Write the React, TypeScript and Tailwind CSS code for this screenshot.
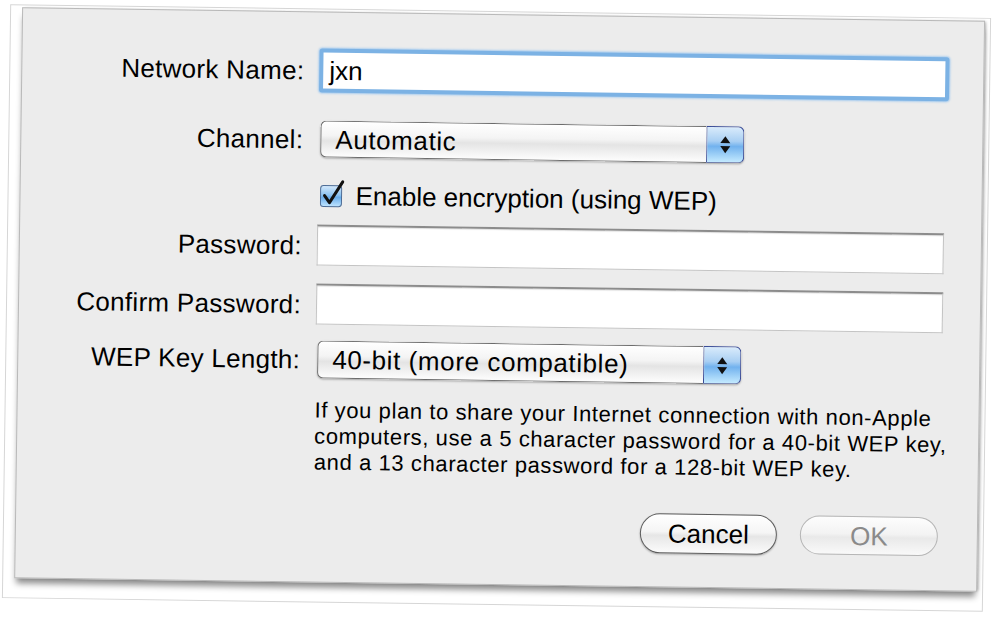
import React from 'react';

// Aqua-style "Network Name" sheet, shown slightly tilted like the photo

const Label = ({ children }: { children: React.ReactNode }) => (
  <div className="w-[282px] shrink-0 text-right text-[26px] leading-none tracking-[0.3px] text-black">
    {children}
  </div>
);

const TextField = ({ value, focused }: { value?: string; focused?: boolean }) => {
  if (focused) {
    return (
      <div className="ml-[15px] flex h-[44px] w-[630px] items-center rounded-[3px] border-[4px] border-[#7cb2e4] bg-white pl-[6px] text-[26px] leading-none text-black shadow-[0_0_2px_1px_#a9cdef]">
        {value}
      </div>
    );
  }
  return (
    <div className="ml-[15px] h-[41px] w-[627px] border border-[#c4c4c4] border-t-[2px] border-t-[#8c8c8c] bg-white shadow-[inset_0_1px_1px_rgba(0,0,0,0.12)]" />
  );
};

const Arrows = () => (
  <svg width="12" height="19" viewBox="0 0 12 19">
    <path d="M6 1 L11 8 L1 8 Z" fill="#111" />
    <path d="M1 11 L11 11 L6 18 Z" fill="#111" />
  </svg>
);

const PopUp = ({ value }: { value: string }) => (
  <div className="ml-[17px] flex h-full w-[424px] rounded-[6px] shadow-[0_1px_2px_rgba(0,0,0,0.3)]">
    <div className="flex flex-1 items-center rounded-l-[6px] border-y border-l border-[#6c6c6c] bg-[linear-gradient(#ffffff,#f4f4f4_40%,#e4e4e4_55%,#fdfdfd)] pl-[14px] text-[26px] leading-none tracking-[0.6px] text-black">
      {value}
    </div>
    <div className="flex w-[38px] items-center justify-center rounded-r-[6px] border border-[#3a4c97] border-b-[#6c7aa8] bg-[linear-gradient(#d9ebfb,#a9cff3_40%,#72b2ee_55%,#c4eaff)]">
      <Arrows />
    </div>
  </div>
);

const CheckBox = () => (
  <svg width="25" height="33" viewBox="0 0 25 33">
    <defs>
      <linearGradient id="cbfill" x1="0" y1="0" x2="0" y2="1">
        <stop offset="0" stopColor="#d6eafc" />
        <stop offset="0.45" stopColor="#8cc2f1" />
        <stop offset="0.55" stopColor="#68aceb" />
        <stop offset="1" stopColor="#c2e6ff" />
      </linearGradient>
    </defs>
    <rect x="1" y="6" width="21" height="21" rx="3" fill="url(#cbfill)" stroke="#4e6d96" />
    <path d="M5 16 L10 23 L23 2" fill="none" stroke="#111" strokeWidth="3" strokeLinecap="round" strokeLinejoin="round" />
  </svg>
);

export default function App() {
  return (
    <div className="h-[617px] w-[1000px] overflow-hidden bg-white pl-[6px] pt-[11px] font-['Liberation_Sans',Arial,sans-serif]">
      {/* parent window edge behind the sheet */}
      <div className="w-fit rotate-[0.8deg] border border-[#d6d6d6] pb-[19px] pl-[11px] pr-[5px] pt-[2px]">
        <div className="flex h-[571px] w-[963px] flex-col border border-[#b9b9b9] bg-[#ececec] pt-[36px] shadow-[0_7px_6px_-2px_rgba(0,0,0,0.45),2px_0_3px_-1px_rgba(0,0,0,0.3)]">
          <div className="flex h-[44px] items-center">
            <Label>Network Name:</Label>
            <TextField value="jxn" focused />
          </div>

          <div className="mt-[28px] flex h-[37px] items-center">
            <Label>Channel:</Label>
            <PopUp value="Automatic" />
          </div>

          <div className="mt-[23px] flex h-[30px] items-center pl-[299px]">
            <CheckBox />
            <span className="ml-[11px] text-[26px] leading-none text-black">Enable encryption (using WEP)</span>
          </div>

          <div className="mt-[14px] flex h-[41px] items-center">
            <Label>Password:</Label>
            <TextField />
          </div>

          <div className="mt-[18px] flex h-[41px] items-center">
            <Label>Confirm Password:</Label>
            <TextField />
          </div>

          <div className="mt-[16px] flex h-[38px] items-center">
            <Label>WEP Key Length:</Label>
            <PopUp value="40-bit (more compatible)" />
          </div>

          <div className="mt-[19px] flex flex-col whitespace-nowrap pl-[297px] text-[22px] leading-[26px] tracking-[0.6px] text-black">
            <span>If you plan to share your Internet connection with non-Apple</span>
            <span>computers, use a 5 character password for a 40-bit WEP key,</span>
            <span>and a 13 character password for a 128-bit WEP key.</span>
          </div>

          <div className="mt-[33px] flex justify-end gap-[23px] pr-[39px]">
            <button className="h-[40px] w-[137px] rounded-full border-[1.5px] border-[#5c5c5c] bg-[linear-gradient(#ffffff,#f5f5f5_45%,#e6e6e6_55%,#fbfbfb)] text-[26px] leading-none text-black shadow-[0_1px_2px_rgba(0,0,0,0.3)]">
              Cancel
            </button>
            <button className="h-[39px] w-[138px] rounded-full border-[1.5px] border-[#b6b6b6] bg-[linear-gradient(#fdfdfd,#f3f3f3_45%,#e9e9e9_55%,#f9f9f9)] text-[26px] leading-none text-[#8a8a8a]">
              OK
            </button>
          </div>
        </div>
      </div>
    </div>
  );
}
